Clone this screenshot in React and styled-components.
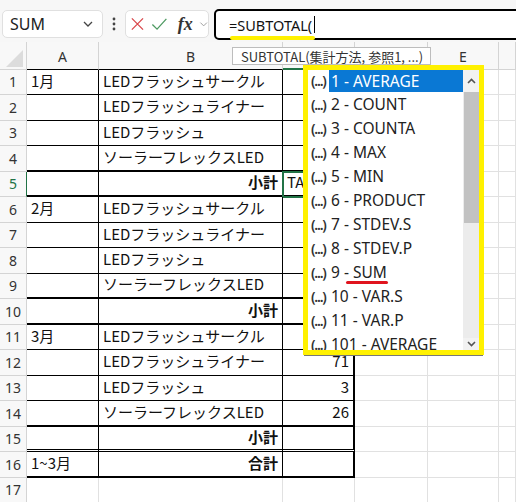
import React from "react"
import styled, { createGlobalStyle } from "styled-components"

const GlobalStyle = createGlobalStyle`
  html, body {
    margin: 0;
    padding: 0;
    background: #fff;
    overflow: hidden;
  }
  * { box-sizing: border-box; }
`

const GRID_LINE = "#e1e1e1"
const HEAD_LINE = "#d4d4d4"
const GREEN = "#217346"
const YELLOW = "#fff100"

const rows = [
  { a: "1月", b: "LEDフラッシュサークル" },
  { b: "LEDフラッシュライナー" },
  { b: "LEDフラッシュ" },
  { b: "ソーラーフレックスLED", line: "thick" },
  { b: "小計", sub: true, line: "thick", c: "TA", selected: true },
  { a: "2月", b: "LEDフラッシュサークル" },
  { b: "LEDフラッシュライナー" },
  { b: "LEDフラッシュ" },
  { b: "ソーラーフレックスLED", line: "thick" },
  { b: "小計", sub: true, line: "thick" },
  { a: "3月", b: "LEDフラッシュサークル" },
  { b: "LEDフラッシュライナー", c: "71", num: true },
  { b: "LEDフラッシュ", c: "3", num: true },
  { b: "ソーラーフレックスLED", c: "26", num: true, line: "thick" },
  { b: "小計", sub: true, line: "double" },
  { a: "1~3月", b: "合計", sub: true, line: "thick" },
]

const options = [
  "1 - AVERAGE",
  "2 - COUNT",
  "3 - COUNTA",
  "4 - MAX",
  "5 - MIN",
  "6 - PRODUCT",
  "7 - STDEV.S",
  "8 - STDEV.P",
  "9 - SUM",
  "10 - VAR.S",
  "11 - VAR.P",
  "101 - AVERAGE",
]

const bottomLine = (line) => {
  if (line === "thick") return "2px solid #000"
  if (line === "double") return "3px double #000"
  return "1px solid #000"
}

function Toolbar() {
  return (
    <Bar>
      <NameBox>
        <span>SUM</span>
        <svg width="12" height="12" viewBox="0 0 12 12">
          <path d="M2 4 L6 8 L10 4" fill="none" stroke="#444" strokeWidth="1.3" />
        </svg>
      </NameBox>
      <Kebab>
        <svg width="4" height="14" viewBox="0 0 4 14">
          <circle cx="2" cy="2" r="1.4" fill="#444" />
          <circle cx="2" cy="7" r="1.4" fill="#444" />
          <circle cx="2" cy="12" r="1.4" fill="#444" />
        </svg>
      </Kebab>
      <FxGroup>
        <svg width="16" height="16" viewBox="0 0 16 16">
          <path d="M2 2 L14 14 M14 2 L2 14" stroke="#d9474b" strokeWidth="1.4" />
        </svg>
        <svg width="18" height="16" viewBox="0 0 18 16">
          <path d="M1.5 8.5 L6.5 13.5 L16.5 2.5" fill="none" stroke="#4e9a62" strokeWidth="1.4" />
        </svg>
        <FxText>fx</FxText>
        <svg width="10" height="10" viewBox="0 0 10 10">
          <path d="M1.5 3.5 L5 7 L8.5 3.5" fill="none" stroke="#999" strokeWidth="1" />
        </svg>
      </FxGroup>
      <FormulaBar>
        <Marked>=SUBTOTAL(</Marked>
        <Caret />
      </FormulaBar>
    </Bar>
  )
}

function Sheet() {
  return (
    <Grid>
      <HeadCell $bottom="1px solid #d4d4d4">
        <svg width="17" height="17" viewBox="0 0 17 17">
          <polygon points="17,0 17,17 0,17" fill="#dcdcdc" />
        </svg>
      </HeadCell>
      <HeadCell $bottom="1px solid #000">A</HeadCell>
      <HeadCell $bottom="1px solid #000">B</HeadCell>
      <HeadCell $bottom={`2px solid ${GREEN}`}>C</HeadCell>
      <HeadCell $bottom={`1px solid ${HEAD_LINE}`} />
      <HeadCell $bottom={`1px solid ${HEAD_LINE}`}>E</HeadCell>
      <HeadCell $bottom={`1px solid ${HEAD_LINE}`} />

      {rows.map((r, i) => {
        const bl = bottomLine(r.line)
        return (
          <React.Fragment key={i}>
            <RowHead $active={r.selected}>{i + 1}</RowHead>
            <Cell $bottom={bl} $right="1px solid #000">{r.a}</Cell>
            <Cell $bottom={bl} $right="1px solid #000" $align={r.sub ? "right" : "left"} $bold={r.sub}>
              {r.b}
            </Cell>
            <Cell $bottom={bl} $right="2px solid #000" $align={r.num ? "right" : "left"} $selected={r.selected}>
              {r.c}
            </Cell>
            <Cell />
            <Cell />
            <Cell />
          </React.Fragment>
        )
      })}

      <RowHead>17</RowHead>
      <Cell />
      <Cell />
      <Cell />
      <Cell />
      <Cell />
      <Cell />
    </Grid>
  )
}

function Dropdown() {
  return (
    <Popup>
      <List>
        {options.map((o, i) => {
          const [n, name] = o.split(" - ")
          return (
            <Item key={o}>
              <ArgIcon>(...)</ArgIcon>
              <Label $active={i === 0}>
                {n} - {name === "SUM" ? <RedMark>SUM</RedMark> : name}
              </Label>
            </Item>
          )
        })}
      </List>
      <Scroll>
        <ScrollBtn>
          <svg width="9" height="6" viewBox="0 0 9 6">
            <path d="M1 5 L4.5 1.5 L8 5" fill="none" stroke="#555" strokeWidth="1.6" />
          </svg>
        </ScrollBtn>
        <Thumb />
        <Track />
        <ScrollBtn $bottom>
          <svg width="9" height="6" viewBox="0 0 9 6">
            <path d="M1 1 L4.5 4.5 L8 1" fill="none" stroke="#555" strokeWidth="1.6" />
          </svg>
        </ScrollBtn>
      </Scroll>
    </Popup>
  )
}

export default function App() {
  return (
    <Page>
      <GlobalStyle />
      <Toolbar />
      <Sheet />
      <Tip>SUBTOTAL(集計方法, 参照1, ...)</Tip>
      <Dropdown />
    </Page>
  )
}

const Page = styled.div`
  position: relative;
  width: 516px;
  height: 502px;
  overflow: hidden;
  background: #fff;
  font-family: "Noto Sans CJK JP", "Noto Sans", sans-serif;
`

const Bar = styled.div`
  height: 42px;
  display: flex;
  align-items: flex-start;
  padding: 10px 0 0 2px;
  background: #f7f7f7;
`

const NameBox = styled.div`
  width: 101px;
  height: 28px;
  display: flex;
  align-items: center;
  justify-content: space-between;
  padding: 0 8px 0 7px;
  background: #fff;
  border: 1px solid #e0e0e0;
  border-radius: 5px;
  font-family: "Noto Sans", sans-serif;
  font-size: 16px;
  color: #222;
`

const Kebab = styled.div`
  width: 22px;
  height: 28px;
  display: flex;
  align-items: center;
  justify-content: center;
`

const FxGroup = styled.div`
  width: 84px;
  height: 28px;
  display: flex;
  align-items: center;
  gap: 6px;
  padding-left: 4px;
  background: #fff;
  border: 1px solid #e0e0e0;
  border-radius: 5px;
`

const FxText = styled.span`
  font-family: "Liberation Serif", serif;
  font-style: italic;
  font-weight: bold;
  font-size: 18px;
  color: #333;
  margin-left: 4px;
  line-height: 1;
`

const FormulaBar = styled.div`
  flex: 1;
  height: 31px;
  margin: -1px -6px 0 5px;
  display: flex;
  align-items: center;
  padding-left: 13px;
  background: #fff;
  border: 2px solid #000;
  border-radius: 5px;
  font-family: "Noto Sans", sans-serif;
  font-size: 14.5px;
  color: #111;
`

const Marked = styled.span`
  position: relative;
  &::after {
    content: "";
    position: absolute;
    left: 1px;
    right: -3px;
    bottom: -5px;
    height: 4px;
    border-radius: 2px;
    background: ${YELLOW};
  }
`

const Caret = styled.span`
  width: 1px;
  height: 17px;
  margin-left: 2px;
  background: #000;
`

const Grid = styled.div`
  display: grid;
  grid-template-columns: 27px 72px 184px 72px 73px 71px 1fr;
  grid-template-rows: 27.5px repeat(17, 25.5px);
`

const HeadCell = styled.div`
  display: flex;
  align-items: center;
  justify-content: center;
  background: #f8f8f8;
  border-right: 1px solid ${HEAD_LINE};
  border-bottom: ${(p) => p.$bottom};
  font-family: "Noto Sans", sans-serif;
  font-size: 14px;
  color: #333;
  padding-top: 2px;
  svg { margin: 4px 0 0 2px; }
`

const RowHead = styled.div`
  display: flex;
  align-items: center;
  justify-content: center;
  background: #f8f8f8;
  border-right: 1px solid ${(p) => (p.$active ? GREEN : HEAD_LINE)};
  border-bottom: 1px solid ${HEAD_LINE};
  font-family: "Noto Sans", sans-serif;
  font-size: 14px;
  color: ${(p) => (p.$active ? GREEN : "#333")};
`

const Cell = styled.div`
  position: relative;
  display: flex;
  align-items: center;
  justify-content: ${(p) => (p.$align === "right" ? "flex-end" : "flex-start")};
  padding: 0 4px 3px 4px;
  border-right: ${(p) => p.$right || `1px solid ${GRID_LINE}`};
  border-bottom: ${(p) => p.$bottom || `1px solid ${GRID_LINE}`};
  font-size: 15px;
  font-weight: ${(p) => (p.$bold ? 700 : 400)};
  color: #111;
  white-space: nowrap;
  outline: ${(p) => (p.$selected ? `2px solid ${GREEN}` : "none")};
  outline-offset: -1px;
`

const Tip = styled.div`
  position: absolute;
  left: 232px;
  top: 47px;
  width: 199px;
  height: 18px;
  display: flex;
  align-items: center;
  padding-left: 8px;
  background: #fff;
  border: 1px solid #bdbdbd;
  font-size: 13px;
  color: #333;
  white-space: nowrap;
`

const Popup = styled.div`
  position: absolute;
  left: 303px;
  top: 65px;
  width: 181px;
  height: 290px;
  display: flex;
  background: #fff;
  border: 5px solid ${YELLOW};
  box-shadow: 0 2px 0 -1px #777;
`

const List = styled.div`
  flex: 1;
  overflow: hidden;
  margin-top: -2px;
`

const Item = styled.div`
  height: 24px;
  display: flex;
  align-items: center;
  font-family: "Noto Sans", sans-serif;
  font-size: 15.5px;
  color: #222;
  white-space: nowrap;
  &:first-child > span:last-child { margin-top: 2px; }
`

const ArgIcon = styled.span`
  width: 21px;
  padding-left: 3px;
  font-family: "Noto Sans", sans-serif;
  font-size: 14px;
  font-weight: 600;
  letter-spacing: -1.2px;
  color: #333;
`

const Label = styled.span`
  flex: 1;
  height: 22px;
  display: flex;
  align-items: center;
  padding-left: 2px;
  white-space: pre;
  background: ${(p) => (p.$active ? "#0a78d4" : "transparent")};
  color: ${(p) => (p.$active ? "#fff" : "#222")};
`

const RedMark = styled.span`
  position: relative;
  &::after {
    content: "";
    position: absolute;
    left: -7px;
    right: -1px;
    bottom: -1px;
    height: 3px;
    border-radius: 2px;
    background: #e0141e;
  }
`

const Scroll = styled.div`
  width: 16px;
  display: flex;
  flex-direction: column;
  background: #ececec;
`

const ScrollBtn = styled.div`
  height: ${(p) => (p.$bottom ? "12px" : "22px")};
  display: flex;
  align-items: center;
  justify-content: center;
  background: #f2f2f2;
  margin-top: ${(p) => (p.$bottom ? "auto" : "0")};
`

const Thumb = styled.div`
  height: 131px;
  margin: 0 0 0 1px;
  background: #c2c2c2;
`

const Track = styled.div`
  flex: 1;
`
